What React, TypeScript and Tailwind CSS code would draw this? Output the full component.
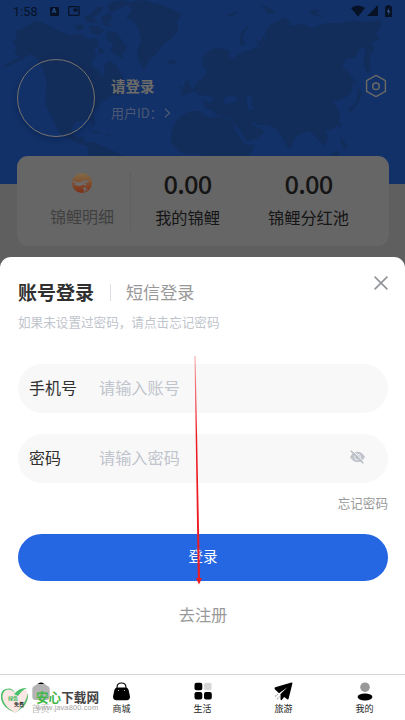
import { ReactNode } from 'react'

const WORLD = [
  // North America
  'M0 67L10 62L20 57L14 53L17 48L13 43L17 37L16 31L25 27L31 23L36 20L45 24L52 27L61 32L71 35L80 34L88 39L96 38L100 43L94 50L97 55L91 63L94 68L99 70L101 77L105 73L104 65L109 61L116 65L120 72L124 78L121 84L125 90L119 96L112 95L107 100L101 101L97 108L93 112L95 123L93 127L89 120L83 121L76 122L72 128L73 135L79 138L83 136L85 142L94 144L90 147L80 144L68 138L59 133L54 122L49 112L46 105L45 97L47 88L46 80L43 70L38 60L31 54L26 57L18 62L8 66Z',
  // Arctic islands
  'M84 17L91 14L96 8L104 6L101 13L93 17L97 22L88 23ZM101 17L109 13L113 18L108 22L112 27L104 25ZM107 5L113 2L121 0L130 2L123 7L116 10L111 14ZM89 26L98 26L104 30L99 35L91 33ZM108 31L116 32L122 40L128 48L122 53L124 59L116 55L110 50L114 45L106 39ZM75 25L82 24L84 29L77 31ZM98 46L105 51L99 55Z',
  // Greenland and Iceland
  'M127 3L143 0L158 4L174 10L182 15L177 22L178 31L171 39L163 45L157 53L148 62L144 70L139 61L137 51L141 39L138 28L132 20L126 18L132 11ZM167 61L173 59L177 62L172 65L167 63Z',
  // Caribbean
  'M88 129L98 132L102 134L96 134ZM104 134L111 135L108 137Z',
  // South America
  'M87 143L94 142L104 147L114 151L122 155L129 157L127 164L122 171L117 184L98 184L96 174L89 163Z',
  // Europe and Asia
  'M203 78L207 71L204 67L202 62L205 54L214 48L224 49L231 52L228 56L233 59L238 54L244 51L250 50L258 47L263 50L260 42L263 36L266 41L265 31L270 25L279 20L283 17L289 21L291 26L303 24L312 28L326 23L340 23L352 20L365 22L381 20L380 28L376 34L380 40L372 42L374 50L370 56L371 70L367 73L363 63L365 54L364 46L359 50L356 57L346 59L342 67L349 72L353 81L352 90L348 96L342 99L335 101L332 103L337 107L340 115L339 124L333 129L325 131L328 138L325 146L319 141L313 134L308 131L302 133L295 138L291 149L286 146L281 135L275 128L267 125L258 125L251 120L254 126L262 129L264 133L257 139L246 142L240 134L233 123L231 118L223 117L216 115L212 110L204 108L203 100L210 103L214 98L206 95L200 96L193 90L197 81Z',
  // Britain
  'M185 82L189 79L190 86L194 91L187 94L180 97L183 89ZM180 85L183 88L179 91Z',
  // Africa
  'M181 116L190 111L200 111L208 117L220 117L231 120L237 132L244 144L255 145L251 153L244 161L240 171L232 184L211 184L207 172L208 162L200 154L189 155L179 152L171 143L171 133L175 123Z',
  // Islands of the north and east
  'M240 45L240 35L246 27L250 26L245 31L243 38L246 45ZM255 37L261 43L264 52L259 47ZM261 5L270 8L276 14L267 13ZM309 10L323 9L316 13L323 17L312 15ZM226 15L239 11L232 17ZM358 87L362 94L359 102L351 112L348 109L356 103ZM351 75L357 83L355 84ZM339 121L342 126L339 128ZM341 136L348 147L344 149L340 141ZM309 153L318 161L323 169L315 165ZM327 159L336 150L340 156L334 165ZM343 155L350 157L347 165Z',
]

const SEAS =
  'M224 98L230 95L238 98L235 102L225 104ZM247 95L252 97L251 105L255 109L249 110L247 103ZM232 122L240 130L246 141L241 139L235 130Z'

function WorldMap() {
  return (
    <svg className="absolute inset-0" width="405" height="184" viewBox="0 0 405 184">
      <g fill="#132d5b">
        {WORLD.map((d, i) => (
          <path key={i} d={d} />
        ))}
      </g>
      <path d={SEAS} fill="#123168" />
    </svg>
  )
}

function StatusBar() {
  return (
    <div className="relative flex h-[22px] items-center pl-[13px] pr-[12px] text-[#071226]">
      <span className="mt-[2px] font-['Roboto',sans-serif] text-[12.5px] leading-none tracking-[0.1px]">1:58</span>
      <span className="ml-[12px] flex size-[9px] items-center justify-center rounded-[1px] bg-[#071226] font-['Roboto',sans-serif] text-[7px] font-bold leading-none text-[#24518f]">
        A
      </span>
      <svg className="ml-[9px]" width="12" height="10" viewBox="0 0 12 10">
        <rect x=".7" y=".7" width="10.4" height="8.6" rx=".8" fill="none" stroke="currentColor" strokeWidth="1.2" />
        <path d="M5.5 2.5h4v3h-4z" fill="currentColor" />
      </svg>
      <div className="-mt-[1px] ml-auto flex items-center gap-[2px]">
        <svg width="14" height="12" viewBox="0 0 14 12">
          <path d="M0 3Q7-2 14 3L7 11.5Z" fill="currentColor" />
        </svg>
        <svg width="11" height="11" viewBox="0 0 11 11">
          <path d="M11 0v11H0Z" fill="currentColor" />
        </svg>
        <svg className="ml-[5px] mr-px" width="7" height="12" viewBox="0 0 7 12">
          <path d="M2 0h3v1.3h2V12H0V1.3h2Z" fill="currentColor" />
          <path d="M4 3L1.8 7h1.5v3L5.3 6H4Z" fill="#315387" />
        </svg>
      </div>
    </div>
  )
}

function Profile() {
  return (
    <div className="relative flex h-[134px] pl-[17px] pr-[18px] pt-[37px]">
      <div className="size-[78px] shrink-0 rounded-full border border-[#77736c] shadow-[0_2px_6px_rgba(5,20,55,0.35)]" />
      <div className="ml-[16px] pt-[17px]">
        <div className="text-[14.5px] font-bold leading-[20px] text-[#6e6c68]">请登录</div>
        <div className="mt-[7px] flex items-center text-[13px] leading-[20px] text-[#4b5873]">
          <span className="w-[53px] whitespace-nowrap">用户ID：</span>
          <svg width="7" height="10" viewBox="0 0 7 10">
            <path d="M1 .7L5.5 5L1 9.3" fill="none" stroke="currentColor" strokeWidth="1.4" />
          </svg>
        </div>
      </div>
      <svg className="ml-auto mt-[15px]" width="22" height="24" viewBox="0 0 22 24">
        <path
          d="M11 1.4L20.4 6.6V17.4L11 22.6L1.6 17.4V6.6Z"
          fill="none"
          stroke="#696865"
          strokeWidth="1.5"
          strokeLinejoin="round"
        />
        <circle cx="11" cy="12.3" r="3.3" fill="none" stroke="#696865" strokeWidth="1.5" />
      </svg>
    </div>
  )
}

function KoiIcon() {
  return (
    <svg width="22" height="22" viewBox="0 0 22 22">
      <defs>
        <linearGradient id="koi" x1="0" y1="0" x2="0" y2="1">
          <stop offset="0" stopColor="#806c48" />
          <stop offset=".5" stopColor="#824d2e" />
          <stop offset="1" stopColor="#7e2d16" />
        </linearGradient>
      </defs>
      <circle cx="11" cy="11" r="10" fill="url(#koi)" />
      <path
        d="M1 9.5Q4 8.5 6 10Q8 10.5 11 9.5L13 7.7L14 8.7L17.5 8L18 10Q15.5 10.5 13.5 11.5L16 13L14 13.5L11.5 12.8Q9.5 15 6.5 13.5L2 13L5 12Z"
        fill="#6d6a69"
      />
      <path d="M11 16.5L15 14.8L14.5 16.5L17 17L13.5 20L12.5 19.5L13.5 17.7Z" fill="#686868" />
    </svg>
  )
}

function BalanceCard() {
  return (
    <div className="relative ml-[17px] mr-[16px] -mt-[28px] flex h-[90px] rounded-[11px] bg-[#666]">
      <div className="flex w-[113px] flex-col items-center pl-[17px] pt-[16px]">
        <KoiIcon />
        <div className="mt-[11px] whitespace-nowrap text-[16px] leading-[22px] text-[#404040]">锦鲤明细</div>
      </div>
      <div className="mt-[16px] h-[58px] w-px bg-[#5f5f5f]" />
      <div className="flex w-[113px] flex-col items-center pt-[12px] text-[#151515]">
        <div className="text-[25.5px] font-medium leading-[30px] tracking-[-0.8px]">0.00</div>
        <div className="mt-[8px] whitespace-nowrap text-[16.2px] leading-[22px]">我的锦鲤</div>
      </div>
      <div className="flex w-[129px] flex-col items-center pt-[12px] text-[#151515]">
        <div className="text-[25.5px] font-medium leading-[30px] tracking-[-0.8px]">0.00</div>
        <div className="mt-[8px] whitespace-nowrap text-[16.2px] leading-[22px]">锦鲤分红池</div>
      </div>
    </div>
  )
}

interface FieldProps {
  label: string
  placeholder: string
  children?: ReactNode
}

function Field({ label, placeholder, children }: FieldProps) {
  return (
    <div className="flex h-[49px] items-center rounded-full bg-[#f8f8f8] pb-[4px] pl-[11px] pr-[23px] text-[16px] leading-[24px]">
      <span className="w-[70px] text-[#303030]">{label}</span>
      <span className="text-[16.2px] text-[#c0c4cc]">{placeholder}</span>
      {children}
    </div>
  )
}

function HiddenEye() {
  return (
    <svg className="ml-auto" width="15" height="14" viewBox="0 0 15 14">
      <path d="M0 7Q3 1.8 7.5 1.8T15 7Q12 12.2 7.5 12.2T0 7Z" fill="#c0c4cc" />
      <circle cx="7.5" cy="7" r="2.9" fill="none" stroke="#f8f8f8" strokeWidth=".8" />
      <path d="M2.2 .2L14.4 12.2" stroke="#f8f8f8" strokeWidth=".9" />
      <path d="M.8 .8L13.3 13.2" stroke="#b6bbc6" strokeWidth="1.5" />
    </svg>
  )
}

function LoginSheet() {
  return (
    <div className="relative mt-[10.5px] h-[417.5px] rounded-t-[11px] bg-white pl-[18px] pr-[17px] pt-[19.5px]">
      <div className="flex items-center">
        <span className="text-[19px] font-bold leading-[30px] text-[#303030]">账号登录</span>
        <span className="ml-[16px] mt-[2px] h-[17px] w-px bg-[#dcdfe6]" />
        <span className="ml-[15px] mt-px text-[17.1px] leading-[30px] text-[#999]">短信登录</span>
        <svg className="-mt-[18px] ml-auto" width="14" height="14" viewBox="0 0 14 14">
          <path d="M.6 .6L13.4 13.4M13.4 .6L.6 13.4" stroke="#909399" strokeWidth="1.6" />
        </svg>
      </div>
      <div className="mt-[5px] text-[12.6px] leading-[20px] text-[#c0c4cc]">如果未设置过密码，请点击忘记密码</div>
      <div className="mt-[32px] flex flex-col gap-[21px]">
        <Field label="手机号" placeholder="请输入账号" />
        <Field label="密码" placeholder="请输入密码">
          <HiddenEye />
        </Field>
      </div>
      <div className="mt-[10px] text-right text-[12.6px] leading-[20px] text-[#999]">忘记密码</div>
      <button className="mt-[21px] flex h-[46.5px] w-full items-center justify-center rounded-full bg-[#2567e2] pb-[3px] text-[14.5px] text-white">
        登录
      </button>
      <div className="mt-[21.5px] text-center text-[16.2px] leading-[24px] text-[#999]">去注册</div>
    </div>
  )
}

function TabItem({ label, children }: { label: string; children: ReactNode }) {
  return (
    <div className="flex flex-1 flex-col items-center pt-[6px]">
      <div className="flex h-[20px] items-center">{children}</div>
      <span className="text-[9px] leading-[15px] text-[#222]">{label}</span>
    </div>
  )
}

function TabBar() {
  return (
    <div className="flex h-[46px] border-t border-[#d6d6d6] bg-white">
      <TabItem label="首页">
        <svg width="18" height="19" viewBox="0 0 18 19">
          <path d="M7.5 .8Q9 0 10.5 .8L16.5 4.5Q17.7 5.3 17.7 7V14.5Q17.7 18 14.5 18H3.5Q.3 18 .3 14.5V7Q.3 5.3 1.5 4.5Z" fill="#000" />
        </svg>
      </TabItem>
      <TabItem label="商城">
        <svg width="17" height="19" viewBox="0 0 17 19">
          <path d="M4 8V5.5Q4 1 8.5 1T13 5.5V8" fill="none" stroke="#000" strokeWidth="1.1" />
          <path d="M4 5.5H13Q15 5.5 15.6 8L17 14.5Q17 18.3 13.5 18.3H3.5Q0 18.3 0 14.5L1.4 8Q2 5.5 4 5.5Z" fill="#000" />
          <path d="M5 8.5h1M11 8.5h1" stroke="#bbb" strokeWidth="1.2" />
        </svg>
      </TabItem>
      <TabItem label="生活">
        <svg width="18" height="18" viewBox="0 0 18 18">
          <rect x=".5" y=".7" width="7.8" height="7.5" rx="2" />
          <rect x="10" y=".7" width="7.6" height="7.5" rx="2" fill="#d6d6d6" />
          <rect x=".5" y="10" width="7.8" height="7.5" rx="2" />
          <rect x="10" y="10" width="7.8" height="7.5" rx="2" />
        </svg>
      </TabItem>
      <TabItem label="旅游">
        <svg width="19" height="19" viewBox="0 0 19 19">
          <path d="M17.5 .4Q18.7 .3 18.4 1.6L14.6 16.8Q14.2 18 13.2 17.3L10.2 15L7.5 18.2Q6.5 18.3 6.5 17V12L13.5 5.2L5 11.2L.8 7.2Q0 5.8 1.2 5.2Z" />
          <path d="M1 14.5L4 12M3 17L5.5 14.5" stroke="#aaa" strokeWidth="1.1" strokeDasharray="2 .8" />
        </svg>
      </TabItem>
      <TabItem label="我的">
        <svg width="16" height="19" viewBox="0 0 16 19">
          <circle cx="8" cy="5.2" r="4.8" fill="#999" />
          <ellipse cx="8" cy="15" rx="7.4" ry="3.4" />
        </svg>
      </TabItem>
    </div>
  )
}

function SiteStamp() {
  return (
    <div className="absolute bottom-0 left-0 flex h-[36px] w-[102px] items-center bg-white/70 pb-[2px]">
      <svg className="shrink-0" width="30" height="28" viewBox="0 0 30 28">
        <path d="M14 26Q2 20 1 11Q0 4 7 2Q12 1 15 6Q20 0 26 3Q31 10 25 18Q21 23 14 26Z" fill="#fce7e4" />
        <path d="M15 6Q11 1 6 3Q1 6 3 13Q5 20 14 25Q3 21 1 12Q0 3 6 2Q12 0 15 6ZM14 7Q20 0 27 1Q22 3 18 9Z" fill="#47bf68" />
        <path d="M28 6Q29 15 22 21L14 27Q25 19 28 6Z" fill="#59bd6e" />
        <text x="8" y="12.5" fontSize="5" fontWeight="700" fill="#42b960">绿色</text>
        <text x="14" y="19" fontSize="5" fontWeight="700" fill="#333">免费</text>
      </svg>
      <div className="ml-[6px] flex flex-col whitespace-nowrap">
        <span className="text-[12.6px] font-bold leading-[13px] text-[#444]">
          <span className="text-[#41b649]">安心</span>下载网
        </span>
        <span className="font-['Liberation_Sans',sans-serif] text-[7.5px] leading-[9px] tracking-[0.12px] text-[#a5a5a5]">
          www.java800.com
        </span>
      </div>
    </div>
  )
}

function Pointer() {
  return (
    <svg className="pointer-events-none absolute left-[190px] top-[354px]" width="16" height="232" viewBox="0 0 16 232">
      <defs>
        <linearGradient id="pointer" x1="0" y1="0" x2="0" y2="1">
          <stop offset="0" stopColor="#ed1c24" stopOpacity=".4" />
          <stop offset=".35" stopColor="#ed1c24" />
        </linearGradient>
      </defs>
      <path d="M4.5 2H5.5L10 224H12L9 230.5L6 224H7.8Z" fill="url(#pointer)" />
    </svg>
  )
}

export default function App() {
  return (
    <div className="relative h-[720px] w-[405px] overflow-hidden bg-[#5f5f5f] font-['Noto_Sans_CJK_SC',sans-serif]">
      <header className="relative h-[184px] bg-[#123168]">
        <WorldMap />
        <StatusBar />
        <Profile />
      </header>
      <BalanceCard />
      <LoginSheet />
      <TabBar />
      <SiteStamp />
      <Pointer />
    </div>
  )
}
